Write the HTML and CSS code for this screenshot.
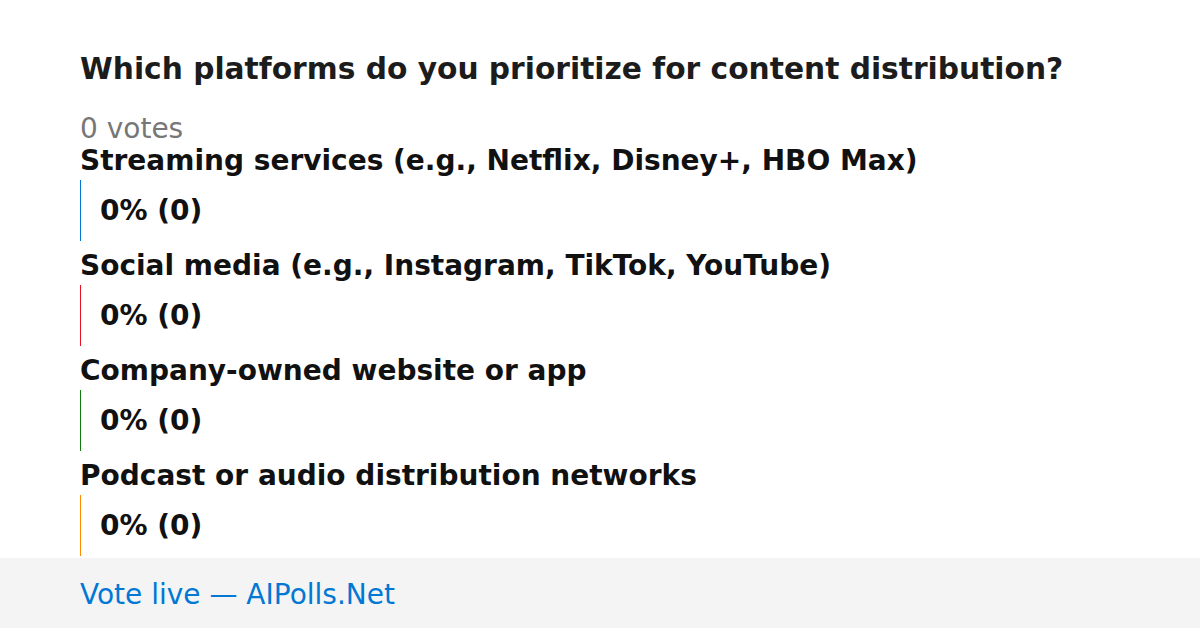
FILE: index.html
```html
<!DOCTYPE html>
<html lang="en">
<head>
    <meta charset="UTF-8">
    <meta name="viewport" content="width=device-width, initial-scale=1.0">
    <title>Poll</title>
    <link rel="stylesheet" href="styles.css">
</head>
<body>
    <div class="poll">
        <h1 class="question">Which platforms do you prioritize for content distribution?</h1>
        <div class="votes">0 votes</div>

        <div class="option">
            <div class="label">Streaming services (e.g., Netflix, Disney+, HBO Max)</div>
            <div class="bar blue"><span>0% (0)</span></div>
        </div>
        <div class="option">
            <div class="label">Social media (e.g., Instagram, TikTok, YouTube)</div>
            <div class="bar red"><span>0% (0)</span></div>
        </div>
        <div class="option">
            <div class="label">Company-owned website or app</div>
            <div class="bar green"><span>0% (0)</span></div>
        </div>
        <div class="option">
            <div class="label">Podcast or audio distribution networks</div>
            <div class="bar orange"><span>0% (0)</span></div>
        </div>
    </div>
    <div class="footer">Vote live — AIPolls.Net</div>
</body>
</html>
```

FILE: styles.css
```css
body {
    margin: 0;
    padding: 0;
    background-color: #fff;
    font-family: "DejaVu Sans", sans-serif;
    height: 628px;
    display: flex;
    flex-direction: column;
    overflow: hidden;
}

.poll {
    flex: 1;
    padding: 49px 80px 0 80px;
}

.question {
    margin: 0;
    font-size: 29.7px;
    font-weight: bold;
    color: #1c1c1c;
    line-height: 40px;
}

.votes {
    margin-top: 31px;
    margin-bottom: -2px;
    font-size: 28px;
    color: #777;
    line-height: 18px;
}

.option {
    display: flex;
    flex-direction: column;
}

.label {
    font-size: 28px;
    font-weight: bold;
    color: #111;
    line-height: 38px;
    padding-top: 6px;
}

.bar {
    height: 61px;
    border-left: 1px solid;
    display: flex;
    align-items: center;
    padding-left: 19px;
    font-size: 28px;
    font-weight: bold;
    color: #111;
}

.blue { border-color: #0078d4; }
.red { border-color: #e81123; }
.green { border-color: #107c10; }
.orange { border-color: #ff8c00; }

.footer {
    height: 70px;
    box-sizing: border-box;
    padding-top: 3px;
    flex-shrink: 0;
    background-color: #f4f4f4;
    color: #0078d4;
    font-size: 28px;
    padding-left: 80px;
    display: flex;
    align-items: center;
}
```
